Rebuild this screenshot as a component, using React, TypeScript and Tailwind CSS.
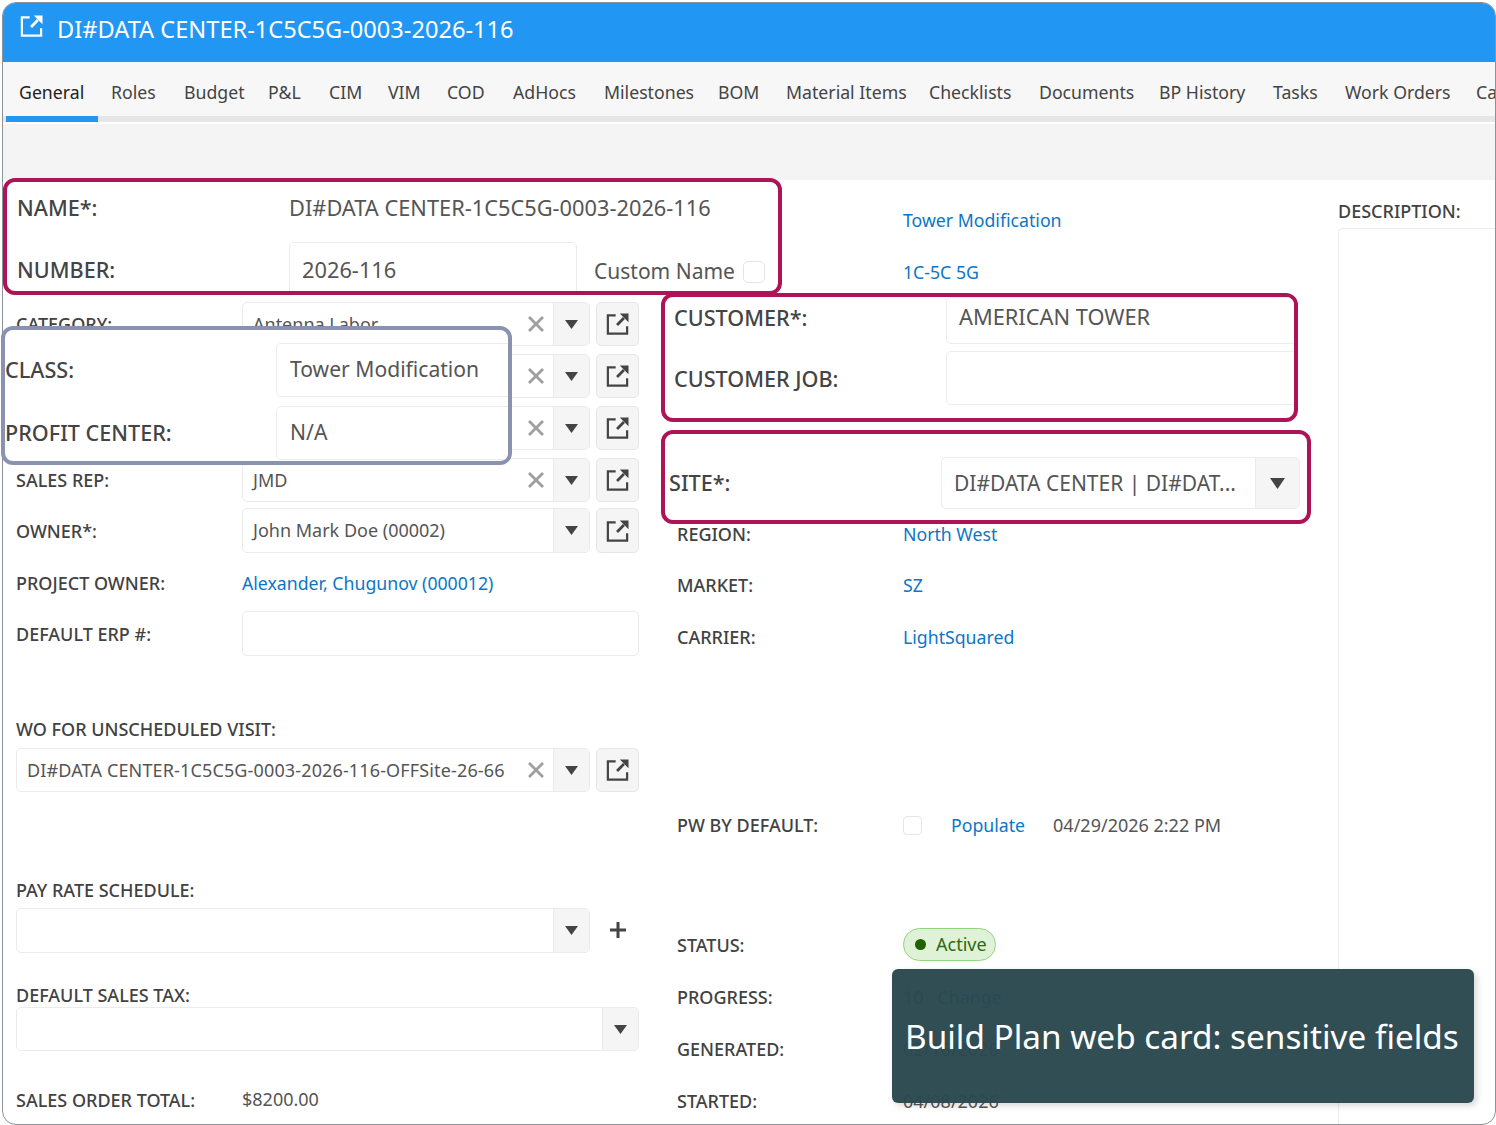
import type { ReactNode } from "react";

const TABS = [
  ["General", "w-[92px]"], ["Roles", "w-[73px]"], ["Budget", "w-[84px]"], ["P&L", "w-[61px]"], ["CIM", "w-[59px]"], ["VIM", "w-[59px]"],
  ["COD", "w-[66px]"], ["AdHocs", "w-[91px]"], ["Milestones", "w-[114px]"], ["BOM", "w-[68px]"], ["Material Items", "w-[143px]"],
  ["Checklists", "w-[110px]"], ["Documents", "w-[120px]"], ["BP History", "w-[114px]"], ["Tasks", "w-[72px]"], ["Work Orders", "w-[131px]"], ["Ca", "w-[40px]"],
] as const;

function OpenIcon({ className = "w-[23px] h-[22px] text-[#444]" }: { className?: string }) {
  return (
    <svg viewBox="0 0 24 24" className={className} fill="none" stroke="currentColor" strokeWidth="2.4">
      <path d="M10 2.5H1.5v20h21v-8" />
      <path d="M11.5 13 19 5.5" strokeWidth="3" />
      <path d="M14.5 0.5h9.5v9.5z" fill="currentColor" stroke="none" />
    </svg>
  );
}

function Caret({ className = "w-[13px] h-[9px]" }: { className?: string }) {
  return (
    <svg viewBox="0 0 13 9" className={className} preserveAspectRatio="none">
      <polygon points="0,0 13,0 6.5,9" fill="#444" />
    </svg>
  );
}

function Label({ children, className = "" }: { children: ReactNode; className?: string }) {
  return <div className={`text-[18px] leading-[22px] font-medium text-[#424242] whitespace-nowrap ${className}`}>{children}</div>;
}

function Combo({ value, clear = false, className = "", valueClass = "" }: { value?: string; clear?: boolean; className?: string; valueClass?: string }) {
  return (
    <div className={`flex h-full items-stretch rounded-[5px] border border-[#ebebeb] overflow-hidden ${className}`}>
      <div className={`flex-1 px-[10px] flex items-center text-[18px] text-[#555] whitespace-nowrap ${valueClass}`}>{value}</div>
      {clear && (
        <div className="w-[34px] flex items-center justify-center">
          <svg viewBox="0 0 16 16" className="w-4 h-4" stroke="#9e9e9e" strokeWidth="2.8"><path d="M1 1l14 14M15 1 1 15" /></svg>
        </div>
      )}
      <div className="w-[36px] bg-[#f5f5f5] border-l border-[#ebebeb] flex items-center justify-center"><Caret /></div>
    </div>
  );
}

function OpenButton() {
  return (
    <div className="w-[43px] h-full ml-[6px] shrink-0 rounded-[5px] border border-[#e6e6e6] bg-[#f5f5f5] flex items-center justify-center">
      <OpenIcon />
    </div>
  );
}

function ComboRow({ label, value, clear = true, height = "h-[44px]" }: { label: string; value: string; clear?: boolean; height?: string }) {
  return (
    <div className={`flex items-center ${height}`}>
      <Label className="w-[226px]">{label}</Label>
      <Combo value={value} clear={clear} className="flex-1" />
      <OpenButton />
    </div>
  );
}

function InfoRow({ label, children, className = "" }: { label: string; children?: ReactNode; className?: string }) {
  return (
    <div className={`flex items-center h-[52px] shrink-0 ${className}`}>
      <Label className="w-[226px]">{label}</Label>
      {children}
    </div>
  );
}

function Link({ children }: { children: ReactNode }) {
  return <span className="text-[17.7px] text-[#0b76c8] whitespace-nowrap">{children}</span>;
}

function Plain({ children }: { children: ReactNode }) {
  return <span className="text-[18px] text-[#555] whitespace-nowrap">{children}</span>;
}

function OverlayInput({ children, className = "" }: { children?: ReactNode; className?: string }) {
  return <div className={`shrink-0 rounded-[5px] border border-[#ececec] bg-white flex items-center text-[#555] whitespace-nowrap ${className}`}>{children}</div>;
}

function BigLabel({ children, className = "" }: { children: ReactNode; className?: string }) {
  return <div className={`shrink-0 text-[21.6px] font-medium text-[#444] whitespace-nowrap ${className}`}>{children}</div>;
}

export default function App() {
  return (
    <div className="relative w-[1496px] h-[1125px] bg-white overflow-hidden" style={{ fontFamily: '"Noto Sans", sans-serif' }}>
      <div className="ml-[2px] mt-[2px] h-[1123px] rounded-[14px] border border-[#8b9299] overflow-hidden flex flex-col bg-white">
        {/* Header */}
        <div className="h-[59px] shrink-0 bg-[#2196f3] flex items-center pl-[17px] pb-[6px] text-white">
          <OpenIcon className="w-[23px] h-[22px] text-white mb-[7px]" />
          <span className="ml-[14px] text-[23.6px]">DI#DATA CENTER-1C5C5G-0003-2026-116</span>
        </div>

        {/* Tabs */}
        <div className="shrink-0 bg-[#f7f7f7]">
          <div className="h-[54px] flex items-center pl-[16px] pt-[6px]">
            {TABS.map(([name, width], i) => (
              <span key={name} className={`${width} shrink-0 text-[17.7px] whitespace-nowrap ${i === 0 ? "text-[#222]" : "text-[#444]"}`}>{name}</span>
            ))}
          </div>
          <div className="h-[6px] bg-[#e6e6e6] pl-[3px]"><div className="w-[92px] h-full bg-[#2196f3]" /></div>
          <div className="h-[2px] bg-white" />
        </div>
        <div className="h-[56px] shrink-0 bg-[#f4f4f4]" />

        {/* Form */}
        <div className="flex-1 flex min-h-0">
          <div className="w-[623px] ml-[13px] shrink-0 pt-[122px] flex flex-col">
            <div className="flex flex-col gap-[8px]">
              <ComboRow label="CATEGORY:" value="Antenna Labor" />
              <ComboRow label="CLASS:" value="Tower Modification" />
              <ComboRow label="PROFIT CENTER:" value="N/A" />
              <ComboRow label="SALES REP:" value="JMD" />
            </div>
            <div className="mt-[6px]"><ComboRow label="OWNER*:" value="John Mark Doe (00002)" clear={false} height="h-[45px]" /></div>
            <div className="h-[44px] mt-[8px] flex items-center">
              <Label className="w-[226px]">PROJECT OWNER:</Label>
              <Link>Alexander, Chugunov (000012)</Link>
            </div>
            <div className="h-[45px] mt-[6px] flex items-center">
              <Label className="w-[226px]">DEFAULT ERP #:</Label>
              <div className="flex-1 h-full rounded-[5px] border border-[#ebebeb]" />
            </div>
            <Label className="mt-[62px]">WO FOR UNSCHEDULED VISIT:</Label>
            <div className="h-[44px] mt-[8px] flex">
              <Combo value="DI#DATA CENTER-1C5C5G-0003-2026-116-OFFSite-26-66" clear className="flex-1" valueClass="tracking-[0.14px]" />
              <OpenButton />
            </div>
            <Label className="mt-[87px]">PAY RATE SCHEDULE:</Label>
            <div className="h-[45px] mt-[7px] flex">
              <Combo className="flex-1" />
              <div className="w-[43px] ml-[6px] pb-[2px] shrink-0 flex items-center justify-center">
                <svg viewBox="0 0 16 16" className="w-4 h-4"><path d="M8 0v16M0 8h16" stroke="#444" strokeWidth="3" /></svg>
              </div>
            </div>
            <Label className="mt-[31px]">DEFAULT SALES TAX:</Label>
            <div className="h-[44px] mt-[1px]"><Combo /></div>
            <div className="flex items-center mt-[35px]">
              <Label className="w-[226px]">SALES ORDER TOTAL:</Label>
              <Plain>$8200.00</Plain>
            </div>
          </div>

          <div className="w-[623px] ml-[38px] shrink-0 pt-[14px] flex flex-col">
            <InfoRow label=""><Link>Tower Modification</Link></InfoRow>
            <InfoRow label=""><Link>1C-5C 5G</Link></InfoRow>
            <InfoRow label="REGION:" className="mt-[210px]"><Link>North West</Link></InfoRow>
            <InfoRow label="MARKET:" className="-mt-[1px]"><Link>SZ</Link></InfoRow>
            <InfoRow label="CARRIER:"><Link>LightSquared</Link></InfoRow>
            <InfoRow label="PW BY DEFAULT:" className="mt-[136px]">
              <div className="w-[19px] h-[19px] rounded-[4px] border border-[#e5e5e5]" />
              <span className="ml-[29px]"><Link>Populate</Link></span>
              <span className="ml-[28px]"><Plain>04/29/2026 2:22 PM</Plain></span>
            </InfoRow>
            <InfoRow label="STATUS:" className="mt-[68px]">
              <div className="h-[33px] w-[93px] -mt-[2px] rounded-full bg-[#dff2d8] border border-[#8fd67f] flex items-center pl-[11px] gap-[10px] text-[18px] text-[#2a6a10]">
                <div className="w-[11px] h-[11px] rounded-full bg-[#1f6100]" />
                Active
              </div>
            </InfoRow>
            <InfoRow label="PROGRESS:">
              <Plain>10</Plain>
              <span className="ml-[14px]"><Link>Change</Link></span>
            </InfoRow>
            <InfoRow label="GENERATED:"><Plain>02/16/2026</Plain></InfoRow>
            <InfoRow label="STARTED:"><Plain>04/08/2026</Plain></InfoRow>
          </div>

          <div className="flex-1 ml-[38px] pt-[20px] flex flex-col">
            <Label>DESCRIPTION:</Label>
            <div className="flex-1 mt-[6px] rounded-tl-[5px] border-l border-t border-[#ececec]" />
          </div>
        </div>
      </div>

      {/* Highlight: name and number */}
      <div className="absolute left-[3px] top-[178px] w-[779px] h-[117px] rounded-[12px] border-[4px] border-[#ad1457] bg-white overflow-hidden">
        <div className="flex items-center h-[60px] pb-[8px]">
          <BigLabel className="ml-[10px] w-[272px]">NAME*:</BigLabel>
          <span className="text-[21.8px] text-[#555] whitespace-nowrap">DI#DATA CENTER-1C5C5G-0003-2026-116</span>
        </div>
        <div className="flex items-center">
          <BigLabel className="ml-[10px] w-[272px] pb-[4px]">NUMBER:</BigLabel>
          <OverlayInput className="w-[288px] h-[60px] pl-[12px] pb-[4px] text-[21.8px]">2026-116</OverlayInput>
          <span className="ml-[17px] text-[21px] text-[#555] whitespace-nowrap">Custom Name</span>
          <div className="ml-[8px] w-[22px] h-[22px] rounded-[5px] border border-[#e5e5e5]" />
        </div>
      </div>

      {/* Highlight: class and profit center */}
      <div className="absolute left-[1px] top-[326px] w-[511px] h-[139px] rounded-[12px] border-[4px] border-[#8a92b2] bg-white overflow-hidden pt-[13px]">
        <div className="flex items-center h-[54px]">
          <BigLabel className="w-[271px]">CLASS:</BigLabel>
          <OverlayInput className="w-[250px] h-full pl-[13px] pb-[2px] text-[21.1px]">Tower Modification</OverlayInput>
        </div>
        <div className="flex items-center h-[54px] mt-[9px]">
          <BigLabel className="w-[271px]">PROFIT CENTER:</BigLabel>
          <OverlayInput className="w-[250px] h-full pl-[13px] pb-[2px] text-[21.1px]">N/A</OverlayInput>
        </div>
      </div>

      {/* Highlight: customer */}
      <div className="absolute left-[661px] top-[293px] w-[637px] h-[129px] rounded-[12px] border-[4px] border-[#ad1457] bg-white overflow-hidden">
        <div className="flex items-center h-[47px]">
          <BigLabel className="ml-[9px] w-[272px] pb-[4px]">CUSTOMER*:</BigLabel>
          <OverlayInput className="w-[360px] h-full pl-[12px] pb-[6px] text-[21.8px]">AMERICAN TOWER</OverlayInput>
        </div>
        <div className="flex items-center h-[54px] mt-[7px]">
          <BigLabel className="ml-[9px] w-[272px] pt-[2px]">CUSTOMER JOB:</BigLabel>
          <OverlayInput className="w-[360px] h-full" />
        </div>
      </div>

      {/* Highlight: site */}
      <div className="absolute left-[661px] top-[430px] w-[650px] h-[94px] rounded-[12px] border-[4px] border-[#ad1457] bg-white flex items-center pt-[12px]">
        <BigLabel className="ml-[4px] w-[272px]">SITE*:</BigLabel>
        <div className="w-[359px] h-[52px] shrink-0 rounded-[5px] border border-[#ececec] flex overflow-hidden">
          <div className="flex-1 flex items-center pl-[12px] pt-[2px] text-[21px] text-[#555] whitespace-nowrap overflow-hidden">DI#DATA CENTER | DI#DAT...</div>
          <div className="w-[44px] bg-[#f5f5f5] border-l border-[#ebebeb] flex items-center justify-center"><Caret className="w-[15px] h-[11px]" /></div>
        </div>
      </div>

      {/* Caption */}
      <div className="absolute left-[892px] top-[969px] w-[582px] h-[134px] rounded-[6px] bg-[#2a484f]/[0.97] shadow-[3px_3px_6px_rgba(0,0,0,0.15)] flex items-center pl-[13px] pt-[2px]">
        <span className="text-[33.3px] text-white whitespace-nowrap">Build Plan web card: sensitive fields</span>
      </div>
    </div>
  );
}
